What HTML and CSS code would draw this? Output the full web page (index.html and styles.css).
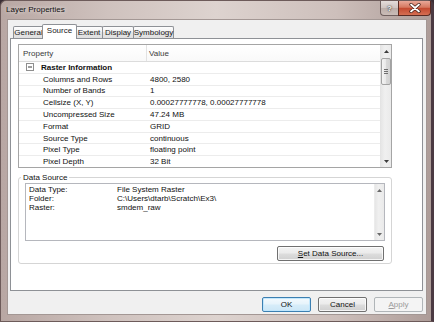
FILE: index.html
```html
<!DOCTYPE html>
<html>
<head>
<meta charset="utf-8">
<title>Layer Properties</title>
<link rel="stylesheet" href="styles.css">
</head>
<body>
<div class="window">
  <div class="titlebar">
    <span class="title">Layer Properties</span>
    <div class="caption">
      <div class="cap-btn help">?</div>
      <div class="cap-btn close">
        <svg width="12" height="10" viewBox="0 0 12 10"><path d="M2 1.5 L10 8.5 M10 1.5 L2 8.5" stroke="#3b1a14" stroke-width="3.2" stroke-linecap="round"/><path d="M2 1.5 L10 8.5 M10 1.5 L2 8.5" stroke="#ffffff" stroke-width="1.8" stroke-linecap="round"/></svg>
      </div>
    </div>
  </div>
  <div class="client">
    <div class="tabs">
      <div class="tab w-general">General</div>
      <div class="tab active w-source">Source</div>
      <div class="tab w-extent">Extent</div>
      <div class="tab w-display">Display</div>
      <div class="tab w-symbology">Symbology</div>
    </div>
    <div class="panel">
      <div class="grid">
        <div class="grid-main">
          <div class="grid-head">
            <div class="c1 hc1">Property</div>
            <div class="c2 hc2">Value</div>
          </div>
          <div class="rows">
            <div class="row cat">
              <span class="exp"><svg width="8" height="8" viewBox="0 0 8 8"><rect x="0.5" y="0.5" width="7" height="7" fill="#fff" stroke="#8f8f8f"/><path d="M2 4 H6" stroke="#3a3a3a" stroke-width="1"/></svg></span>
              <span class="cat-text">Raster Information</span>
            </div>
            <div class="row"><div class="c1">Columns and Rows</div><div class="c2">4800, 2580</div></div>
            <div class="row"><div class="c1">Number of Bands</div><div class="c2">1</div></div>
            <div class="row"><div class="c1">Cellsize (X, Y)</div><div class="c2">0.00027777778, 0.00027777778</div></div>
            <div class="row"><div class="c1">Uncompressed Size</div><div class="c2">47.24 MB</div></div>
            <div class="row"><div class="c1">Format</div><div class="c2">GRID</div></div>
            <div class="row"><div class="c1">Source Type</div><div class="c2">continuous</div></div>
            <div class="row"><div class="c1">Pixel Type</div><div class="c2">floating point</div></div>
            <div class="row"><div class="c1">Pixel Depth</div><div class="c2">32 Bit</div></div>
          </div>
        </div>
        <div class="vscroll">
          <div class="arrow"><svg width="5" height="3" viewBox="0 0 5 3"><path d="M0 3 L2.5 0 L5 3 Z" fill="#3c3c3c"/></svg></div>
          <div class="thumb"><span class="grip"></span></div>
          <div class="track"></div>
          <div class="arrow"><svg width="5" height="3" viewBox="0 0 5 3"><path d="M0 0 L2.5 3 L5 0 Z" fill="#3c3c3c"/></svg></div>
        </div>
      </div>
      <fieldset class="group">
        <legend>Data Source</legend>
        <div class="textbox">
          <div class="tb-content">
            <span>Data Type:</span><span>File System Raster</span>
            <span>Folder:</span><span>C:\Users\dtarb\Scratch\Ex3\</span>
            <span>Raster:</span><span>smdem_raw</span>
          </div>
          <div class="vscroll small">
            <div class="arrow"><svg width="5" height="3" viewBox="0 0 5 3"><path d="M0 3 L2.5 0 L5 3 Z" fill="#6a6a6a"/></svg></div>
            <div class="track"></div>
            <div class="arrow"><svg width="5" height="3" viewBox="0 0 5 3"><path d="M0 0 L2.5 3 L5 0 Z" fill="#6a6a6a"/></svg></div>
          </div>
        </div>
        <div class="group-actions">
          <div class="btn set-btn"><span class="u">S</span>et Data Source...</div>
        </div>
      </fieldset>
    </div>
    <div class="dialog-buttons">
      <div class="btn default">OK</div>
      <div class="btn">Cancel</div>
      <div class="btn disabled"><span class="u">A</span>pply</div>
    </div>
  </div>
</div>
</body>
</html>
```

FILE: styles.css
```css
* { box-sizing: border-box; }
html, body { margin: 0; padding: 0; }
body {
  width: 434px;
  height: 322px;
  overflow: hidden;
  background: #3a2e35;
  font-family: "Liberation Sans", Arial, sans-serif;
  font-size: 8px;
  color: #111;
}
.window {
  width: 434px;
  height: 322px;
  display: flex;
  flex-direction: column;
  border-radius: 6px 6px 0 0;
  background: linear-gradient(to right, #b8a7a3 0%, #cfc2be 25%, #ddd3cf 50%, #cdbfbb 78%, #ad9c98 100%);
  border: 1px solid #6d5b5a;
  border-right: 3px solid #4b3a42;
  padding: 0 4px 6px 6px;
}
.titlebar {
  height: 18px;
  display: flex;
  justify-content: space-between;
  align-items: flex-start;
}
.title {
  line-height: 18px;
  font-size: 8px;
  color: #111;
  margin-left: -1px;
  text-shadow: 0 0 4px rgba(255,255,255,0.9);
}
.caption {
  display: flex;
  margin-right: -4px;
}
.cap-btn {
  height: 15px;
  display: flex;
  align-items: center;
  justify-content: center;
}
.help {
  width: 18px;
  border: 1px solid #6f5f5e;
  border-top: none;
  border-right: none;
  border-radius: 0 0 0 4px;
  background: linear-gradient(#e4dcda, #d0c4c1 48%, #bcaea9 52%, #cabcb7);
  color: #fff;
  font-weight: bold;
  font-size: 8px;
  text-shadow: 0 0 2px #333, 0 0 1px #222;
}
.close {
  width: 33px;
  border: 1px solid #5a2a22;
  border-top: none;
  border-radius: 0 0 4px 0;
  background: linear-gradient(#e9a898, #d67860 45%, #c44a30 52%, #d56e52);
}
.client {
  flex: 1;
  background: #f0f0f0;
  border: 1px solid #a39794;
  display: flex;
  flex-direction: column;
  padding: 4px 3px 2px 1px;
}
.tabs {
  display: flex;
  align-items: flex-end;
  height: 15px;
  padding-left: 4px;
  margin-bottom: -1px;
  position: relative;
  z-index: 1;
}
.tab {
  height: 12px;
  margin-bottom: 1px;
  border: 1px solid #8e9196;
  border-bottom: none;
  border-radius: 2px 2px 0 0;
  background: linear-gradient(#fdfdfd, #f0f0f0 50%, #e4e4e4 50%, #e0e0e0);
  display: flex;
  align-items: center;
  justify-content: center;
  line-height: 10px;
  margin-right: -1px;
  color: #1a1a1a;
}
.tab.active {
  height: 15px;
  margin-bottom: 0;
  background: #fff;
  padding-bottom: 2px;
  position: relative;
  z-index: 2;
}
.w-general { width: 31px; }
.w-source { width: 35px; margin-left: -1px; }
.w-extent { width: 28px; margin-left: -1px; }
.w-display { width: 32px; }
.w-symbology { width: 41px; }
.panel {
  flex: 1;
  margin-left: 1px;
  background: #fff;
  border: 1px solid #8e9196;
  padding: 5px 30px 0 7px;
  display: flex;
  flex-direction: column;
}
.grid {
  height: 124px;
  border: 1px solid #a5a5a5;
  display: flex;
}
.grid-main {
  flex: 1;
  display: flex;
  flex-direction: column;
  min-width: 0;
}
.grid-head {
  height: 17px;
  display: flex;
  border-bottom: 1px solid #dcdcdc;
  background: linear-gradient(#ffffff, #f9f9f9);
  color: #3b3b3b;
}
.grid-head .c1, .grid-head .c2 {
  display: flex;
  align-items: center;
}
.hc1 {
  width: 128px;
  padding-left: 4px;
  border-right: 1px solid #e2e2e2;
}
.hc2 { padding-left: 2px; }
.rows {
  flex: 1;
  display: flex;
  flex-direction: column;
}
.row {
  flex: 1;
  display: flex;
  align-items: center;
  border-bottom: 1px solid #ececec;
  white-space: nowrap;
}
.row:last-child { border-bottom: none; }
.row .c1 {
  width: 128px;
  padding-left: 24px;
}
.row .c2 {
  padding-left: 3px;
}
.row.cat { padding-left: 7px; }
.exp {
  width: 8px;
  height: 8px;
  display: flex;
  margin-right: 7px;
}
.cat-text { font-weight: bold; }
.vscroll {
  width: 11px;
  display: flex;
  flex-direction: column;
  background: linear-gradient(to right, #e6e6e6, #f0f0f0 40%, #eaeaea);
  border-left: 1px solid #e4e4e4;
}
.vscroll .arrow {
  height: 12px;
  display: flex;
  align-items: center;
  justify-content: center;
}
.vscroll .track { flex: 1; }
.thumb {
  height: 27px;
  margin: 1px 0 0 0;
  border: 1px solid #a3a3a3;
  border-radius: 2px;
  background: linear-gradient(to right, #f4f4f4, #e8e8e8 50%, #d9d9d9 51%, #d2d2d2);
  display: flex;
  align-items: center;
  justify-content: center;
}
.grip {
  width: 4px;
  height: 5px;
  background: repeating-linear-gradient(#6f6f6f 0 1px, transparent 1px 2px);
}
.group {
  margin: 5px 0 0 0;
  padding: 1px 6px 2px 6px;
  border: 1px solid #d5d5d5;
  border-radius: 3px;
  min-width: 0;
}
.group legend {
  padding: 0 2px;
  margin-left: -4px;
  line-height: 9px;
  font-size: 8px;
  color: #111;
}
.textbox {
  height: 58px;
  border: 1px solid #b5b7bd;
  display: flex;
  background: #fff;
}
.tb-content {
  flex: 1;
  display: grid;
  grid-template-columns: 88px auto;
  grid-auto-rows: 9px;
  align-content: start;
  line-height: 9px;
  padding: 1px 3px;
  white-space: nowrap;
}
.vscroll.small {
  width: 10px;
  border-left: 1px solid #ececec;
}
.group-actions {
  display: flex;
  justify-content: flex-end;
  margin-top: 5px;
}
.btn {
  height: 15px;
  width: 49px;
  border: 1px solid #707070;
  border-radius: 2px;
  background: linear-gradient(#f3f3f3, #ebebeb 48%, #dddddd 52%, #d0d0d0);
  display: flex;
  align-items: center;
  justify-content: center;
  box-shadow: inset 0 0 0 1px rgba(255,255,255,0.75);
  color: #111;
}
.set-btn {
  width: 107px;
  margin-right: 1px;
}
.u { text-decoration: underline; }
.dialog-buttons {
  display: flex;
  justify-content: flex-end;
  gap: 7px;
  margin: 6px 0 0 0;
}
.btn.default {
  border-color: #3c7fb1;
  background: linear-gradient(#f4fafe, #e6f3fb 48%, #d7edf9 52%, #cce6f6);
  box-shadow: inset 0 0 0 1px rgba(190,230,253,0.9);
}
.btn.disabled {
  border-color: #b0b5b8;
  background: #f4f4f4;
  color: #9a9a9a;
  box-shadow: none;
}
```
